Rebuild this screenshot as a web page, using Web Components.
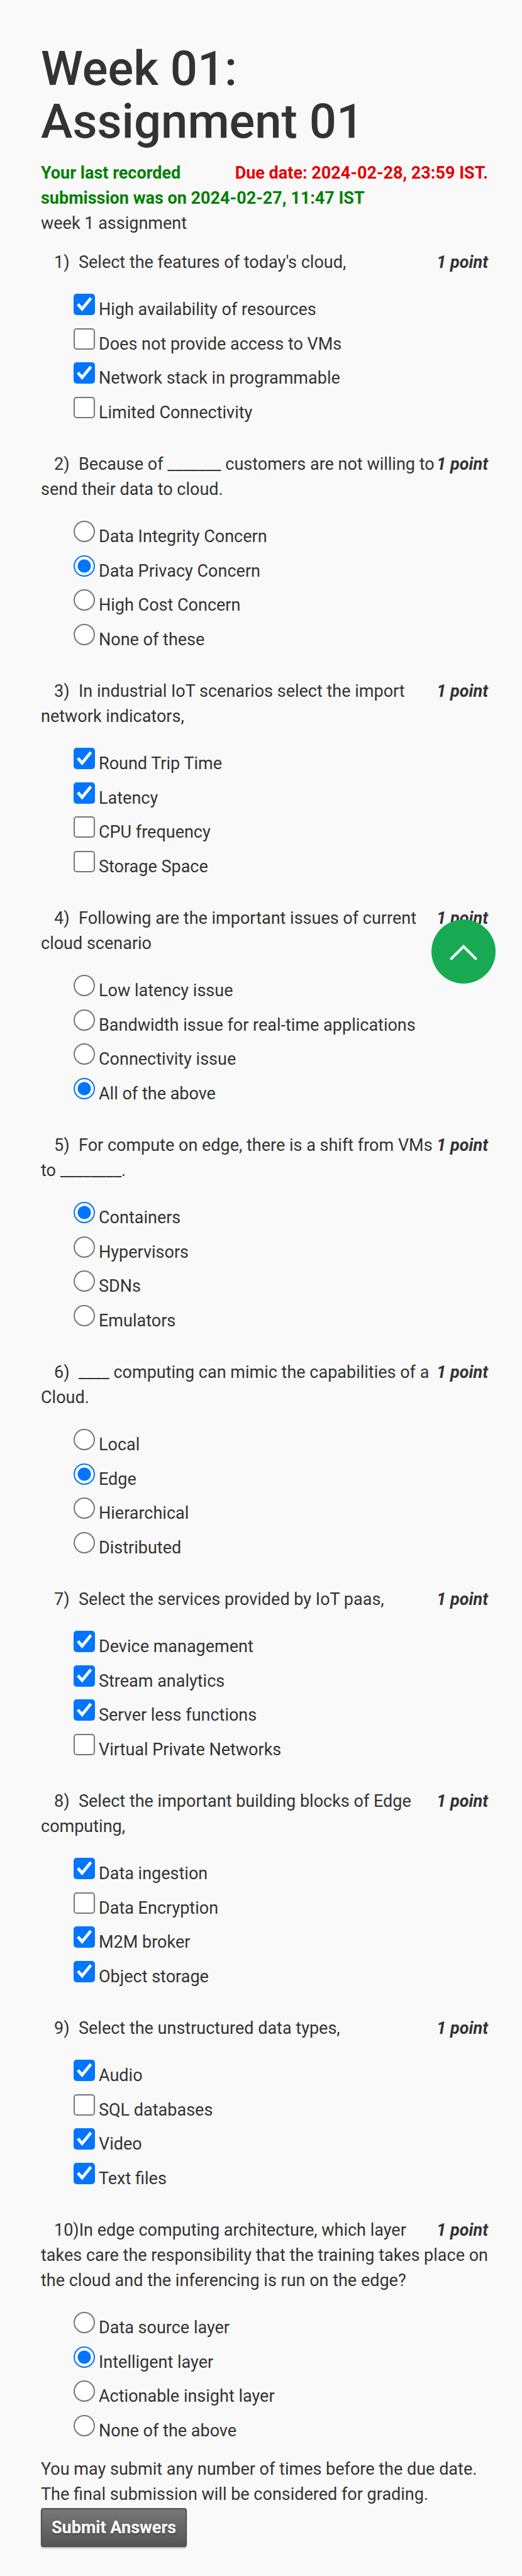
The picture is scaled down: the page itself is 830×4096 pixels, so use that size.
<!DOCTYPE html>
<html lang="en">
<head>
<meta charset="utf-8">
<meta name="viewport" content="width=device-width, initial-scale=1">
<title>Week 01: Assignment 01</title>
<style>
  html { background: #f9f9f9; }
  body { margin: 0; color: #333; font: 27px/40px Roboto, "Liberation Sans", sans-serif; }
</style>
</head>
<body>
<assignment-page id="top">
  <assignment-header slot="header">
    <span slot="title">Week 01: Assignment 01</span>
    <span slot="due">Due date: 2024-02-28, 23:59 IST.</span>
    <span slot="status">Your last recorded submission was on 2024-02-27, 11:47 IST</span>
    <span slot="summary">week 1 assignment</span>
  </assignment-header>

  <quiz-question number="1" type="checkbox">Select the features of today's cloud,
    <quiz-choice checked>High availability of resources</quiz-choice>
    <quiz-choice>Does not provide access to VMs</quiz-choice>
    <quiz-choice checked>Network stack in programmable</quiz-choice>
    <quiz-choice>Limited Connectivity</quiz-choice>
  </quiz-question>
  <quiz-question number="2" type="radio">Because of _______ customers are not willing to send their data to cloud.
    <quiz-choice>Data Integrity Concern</quiz-choice>
    <quiz-choice checked>Data Privacy Concern</quiz-choice>
    <quiz-choice>High Cost Concern</quiz-choice>
    <quiz-choice>None of these</quiz-choice>
  </quiz-question>
  <quiz-question number="3" type="checkbox">In industrial IoT scenarios select the import network indicators,
    <quiz-choice checked>Round Trip Time</quiz-choice>
    <quiz-choice checked>Latency</quiz-choice>
    <quiz-choice>CPU frequency</quiz-choice>
    <quiz-choice>Storage Space</quiz-choice>
  </quiz-question>
  <quiz-question number="4" type="radio">Following are the important issues of current cloud scenario
    <quiz-choice>Low latency issue</quiz-choice>
    <quiz-choice>Bandwidth issue for real-time applications</quiz-choice>
    <quiz-choice>Connectivity issue</quiz-choice>
    <quiz-choice checked>All of the above</quiz-choice>
  </quiz-question>
  <quiz-question number="5" type="radio">For compute on edge, there is a shift from VMs to ________.
    <quiz-choice checked>Containers</quiz-choice>
    <quiz-choice>Hypervisors</quiz-choice>
    <quiz-choice>SDNs</quiz-choice>
    <quiz-choice>Emulators</quiz-choice>
  </quiz-question>
  <quiz-question number="6" type="radio">____ computing can mimic the capabilities of a Cloud.
    <quiz-choice>Local</quiz-choice>
    <quiz-choice checked>Edge</quiz-choice>
    <quiz-choice>Hierarchical</quiz-choice>
    <quiz-choice>Distributed</quiz-choice>
  </quiz-question>
  <quiz-question number="7" type="checkbox">Select the services provided by IoT paas,
    <quiz-choice checked>Device management</quiz-choice>
    <quiz-choice checked>Stream analytics</quiz-choice>
    <quiz-choice checked>Server less functions</quiz-choice>
    <quiz-choice>Virtual Private Networks</quiz-choice>
  </quiz-question>
  <quiz-question number="8" type="checkbox">Select the important building blocks of Edge computing,
    <quiz-choice checked>Data ingestion</quiz-choice>
    <quiz-choice>Data Encryption</quiz-choice>
    <quiz-choice checked>M2M broker</quiz-choice>
    <quiz-choice checked>Object storage</quiz-choice>
  </quiz-question>
  <quiz-question number="9" type="checkbox">Select the unstructured data types,
    <quiz-choice checked>Audio</quiz-choice>
    <quiz-choice>SQL databases</quiz-choice>
    <quiz-choice checked>Video</quiz-choice>
    <quiz-choice checked>Text files</quiz-choice>
  </quiz-question>
  <quiz-question number="10" type="radio">In edge computing architecture, which layer takes care the responsibility that the training takes place on the cloud and the inferencing is run on the edge?
    <quiz-choice>Data source layer</quiz-choice>
    <quiz-choice checked>Intelligent layer</quiz-choice>
    <quiz-choice>Actionable insight layer</quiz-choice>
    <quiz-choice>None of the above</quiz-choice>
  </quiz-question>

  <submit-bar slot="footer">
    <span>You may submit any number of times before the due date.<br>The final submission will be considered for grading.</span>
    <span slot="action">Submit Answers</span>
  </submit-bar>
  <back-to-top slot="overlay"></back-to-top>
</assignment-page>

<script>
  const attach = (host, html) => {
    const template = document.createElement('template');
    template.innerHTML = html;
    const root = host.attachShadow({ mode: 'open' });
    root.append(template.content.cloneNode(true));
    return root;
  };

  customElements.define('assignment-page', class extends HTMLElement {
    constructor() {
      super();
      attach(this, `
        <style>
          :host { display: block; position: relative; padding: 67px 54px 47px 65px; }
          .questions { display: flex; flex-direction: column; gap: 33px; margin: 22px 0 12px; }
        </style>
        <slot name="header"></slot>
        <main class="questions"><slot></slot></main>
        <slot name="footer"></slot>
        <slot name="overlay"></slot>`);
    }
  });

  customElements.define('assignment-header', class extends HTMLElement {
    constructor() {
      super();
      attach(this, `
        <style>
          :host { display: block; }
          h1 { max-width: 600px; margin: 0 0 20px; font-size: 76px; line-height: 84px; font-weight: 500; }
          .due { float: right; color: #e60000; font-weight: 700; }
          .status { color: #008000; font-weight: 700; }
          p { margin: 0; }
        </style>
        <h1><slot name="title"></slot></h1>
        <div class="due"><slot name="due"></slot></div>
        <p class="status"><slot name="status"></slot></p>
        <p><slot name="summary"></slot></p>`);
    }
  });

  customElements.define('quiz-choice', class extends HTMLElement {
    constructor() {
      super();
      attach(this, `<style>:host { display: block; }</style><slot></slot>`);
    }
  });

  customElements.define('quiz-question', class extends HTMLElement {
    connectedCallback() {
      if (this.shadowRoot) return;
      const number = this.getAttribute('number');
      const type = this.getAttribute('type');
      const choices = [...this.querySelectorAll('quiz-choice')];
      const rows = choices.map((choice, i) => {
        choice.slot = 'choice-' + i;
        const checked = choice.hasAttribute('checked') ? 'checked' : '';
        return `<label><input type="${type}" name="answer-${number}" value="${i}" ${checked}><slot name="choice-${i}"></slot></label>`;
      }).join('');
      attach(this, `
        <style>
          :host { display: block; }
          .points { float: right; font-weight: 700; font-style: italic; }
          .number { display: inline-block; min-width: 39px; margin-left: 21px; }
          .choices { display: grid; grid-auto-rows: 1fr; min-height: 218px; margin-top: 30px; padding-left: 52px; }
          label { display: flex; align-items: baseline; justify-self: start; gap: 6px; }
          input {
            appearance: none; flex: none; box-sizing: border-box;
            width: 34px; height: 34px; margin: 0; border: 2px solid #767676; background: #fff;
          }
          input[type=checkbox] { border-radius: 5px; }
          input[type=radio] { border-radius: 50%; }
          input[type=checkbox]:checked { border: 0; background: #0075ff; }
          input[type=checkbox]:checked::before {
            content: ""; display: block; width: 34px; height: 34px; background: #fff;
            clip-path: polygon(15% 54%, 25% 44%, 40% 60%, 76% 16%, 86% 26%, 40% 82%);
          }
          input[type=radio]:checked {
            border-color: #0075ff;
            background: radial-gradient(circle, #0075ff 10px, #fff 11px);
          }
        </style>
        <section role="group" aria-labelledby="prompt">
          <div class="points">1 point</div>
          <div id="prompt"><span class="number">${number})</span><slot></slot></div>
          <div class="choices">${rows}</div>
        </section>`);
    }
  });

  customElements.define('submit-bar', class extends HTMLElement {
    constructor() {
      super();
      attach(this, `
        <style>
          :host { display: block; }
          p { margin: 0 0 2px; }
          button {
            display: block; height: 62px; padding: 0 15px; border: 2px solid #505050; border-radius: 4px;
            background: linear-gradient(#777, #555); color: #fff; font: 700 27px/40px Roboto, "Liberation Sans", sans-serif;
            text-shadow: 0 2px 2px rgba(0, 0, 0, .3); box-shadow: 0 2px 3px rgba(0, 0, 0, .25);
          }
        </style>
        <p><slot></slot></p>
        <button type="submit"><slot name="action"></slot></button>`);
    }
  });

  customElements.define('back-to-top', class extends HTMLElement {
    constructor() {
      super();
      attach(this, `
        <style>
          :host { display: block; position: absolute; top: 1462px; right: 42px; }
          a { display: block; width: 102px; height: 102px; border-radius: 50%; background: #18aa52; }
          svg { display: block; }
        </style>
        <a href="#top" aria-label="Back to top">
          <svg width="102" height="102" viewBox="0 0 132 132" fill="none" stroke="#f9f9f9" stroke-width="5.5" stroke-linecap="round">
            <path d="M41 80.5 66 55.5 91 80.5"/>
          </svg>
        </a>`);
    }
  });
</script>
</body>
</html>
